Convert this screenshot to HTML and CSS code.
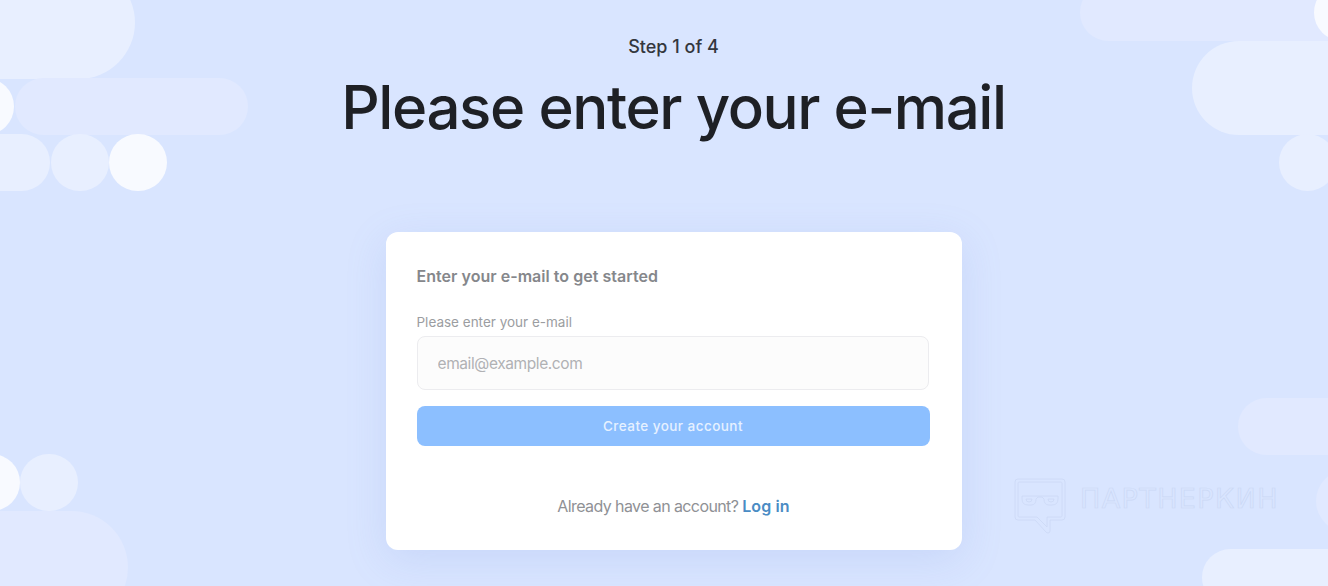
FILE: index.html
```html
<!DOCTYPE html>
<html lang="en">

<head>
    <meta charset="UTF-8">
    <meta name="viewport" content="width=device-width, initial-scale=1.0">
    <title>Step 1 of 4</title>
    <link rel="stylesheet" href="styles.css">
</head>

<body>
    <div class="shapes">
        <div class="shape pale big tl1"></div>
        <div class="shape soft tl2"></div>
        <div class="shape white tl3"></div>
        <div class="shape pale tl4"></div>
        <div class="shape pale tl5"></div>
        <div class="shape white tl6"></div>

        <div class="shape soft tr1"></div>
        <div class="shape white tr2"></div>
        <div class="shape pale tr3"></div>
        <div class="shape pale tr4"></div>

        <div class="shape white bl1"></div>
        <div class="shape pale bl2"></div>
        <div class="shape soft bl3"></div>

        <div class="shape soft br1"></div>
        <div class="shape soft br2"></div>
        <div class="shape pale br3"></div>
    </div>

    <main class="page">
        <div class="step">Step 1 of 4</div>
        <h1 class="title">Please enter your e-mail</h1>

        <form class="card">
            <h2 class="card-title">Enter your e-mail to get started</h2>
            <label class="field-label" for="email">Please enter your e-mail</label>
            <input class="field-input" id="email" type="text" placeholder="email@example.com">
            <button class="submit" type="button">Create your account</button>
            <p class="login">Already have an account? <a href="#">Log in</a></p>
        </form>
    </main>

    <div class="watermark">
        <svg class="watermark-logo" width="52" height="56" viewBox="0 0 52 56" fill="none">
            <path d="M4 1H48Q51 1 51 4V39Q51 42 48 42H36V53Q36 55 34 55Q33 55 32 54L21 42H4Q1 42 1 39V4Q1 1 4 1Z" />
            <path d="M5 4H47Q48 4 48 5V38Q48 39 47 39H33V49L23 39H5Q4 39 4 38V5Q4 4 5 4Z" />
            <path d="M8 18H44V21Q44 27 38 27H35Q30 27 30 21L28 19H24L22 21Q22 27 17 27H14Q8 27 8 21Z" />
            <path d="M12 21H18Q18 24 15 24Q12 24 12 21ZM34 21H40Q40 24 37 24Q34 24 34 21Z" />
        </svg>
        <span class="watermark-text">ПАРТНЕРКИН</span>
    </div>
</body>

</html>
```

FILE: styles.css
```css
* {
    box-sizing: border-box;
}

body {
    margin: 0;
    height: 586px;
    overflow: hidden;
    position: relative;
    background: #d9e5ff;
    font-family: Inter, "Noto Sans", sans-serif;
}

/* background shapes */
.shapes {
    position: absolute;
    inset: 0;
    overflow: hidden;
    filter: blur(.5px);
}

.shape {
    position: absolute;
    height: 57px;
    border-radius: 57px;
}

.white {
    width: 57px;
    background: #f8faff;
}

.pale {
    background: #e8efff;
}

.soft {
    background: #e1e9ff;
}

.tl1 { left: -60px; top: -34px; width: 195px; height: 113px; }
.tl2 { left: 15px; top: 78px; width: 233px; }
.tl3 { left: -43px; top: 78px; }
.tl4 { left: -40px; top: 134px; width: 90px; }
.tl5 { left: 51px; top: 134px; width: 58px; }
.tl6 { left: 109px; top: 134px; width: 58px; }

.tr1 { left: 1080px; top: -16px; width: 300px; }
.tr2 { left: 1314px; top: -16px; }
.tr3 { left: 1192px; top: 41px; width: 220px; height: 94px; }
.tr4 { left: 1279px; top: 134px; width: 57px; }

.bl1 { left: -37px; top: 454px; }
.bl2 { left: 20px; top: 454px; width: 58px; }
.bl3 { left: -60px; top: 511px; width: 188px; height: 113px; }

.br1 { left: 1238px; top: 398px; width: 140px; }
.br2 { left: 1316px; top: 470px; width: 62px; height: 62px; }
.br3 { left: 1202px; top: 549px; width: 180px; }

/* content */
.page {
    position: relative;
    display: flex;
    flex-direction: column;
    align-items: center;
    padding: 37px 0 0 19px;
}

.step {
    font-size: 18px;
    line-height: 20px;
    font-weight: 500;
    color: #34373e;
}

.title {
    margin: 10px 0 0;
    font-size: 60px;
    line-height: 80px;
    font-weight: 500;
    letter-spacing: -1.400px;
    color: #1e2025;
}

.card {
    display: flex;
    flex-direction: column;
    width: 576px;
    height: 318px;
    margin-top: 85px;
    padding: 34px 31px 0;
    background: #fff;
    border-radius: 12px;
    box-shadow: 0 10px 40px rgba(120, 150, 220, .18);
}

.card-title {
    margin: 0;
    font-size: 16px;
    line-height: 20px;
    font-weight: 600;
    letter-spacing: .03px;
    color: #85878b;
}

.field-label {
    margin-top: 28px;
    font-size: 13.500px;
    line-height: 16px;
    color: #9b9da1;
}

.field-input {
    width: 512px;
    height: 54px;
    margin-top: 6px;
    padding: 0 20px;
    background: #fcfcfc;
    border: 1px solid #ececef;
    border-radius: 8px;
    font-family: inherit;
    font-size: 15.500px;
    letter-spacing: -.4px;
}

.field-input::placeholder {
    color: #b0b1b4;
    opacity: 1;
}

.submit {
    width: 513px;
    height: 40px;
    margin-top: 16px;
    background: #8cbfff;
    border: 0;
    border-radius: 8px;
    font-family: inherit;
    font-size: 13.500px;
    font-weight: 500;
    letter-spacing: .45px;
    color: #e6f1ff;
}

.login {
    margin: 50px 0 0;
    text-align: center;
    font-size: 16px;
    line-height: 20px;
    letter-spacing: -.6px;
    color: #8f9195;
}

.login a {
    font-weight: 600;
    letter-spacing: .1px;
    color: #4a8cc4;
    text-decoration: none;
}

/* watermark */
.watermark {
    position: absolute;
    left: 1014px;
    top: 478px;
    display: flex;
    align-items: flex-start;
    gap: 14px;
}

.watermark-logo path {
    stroke: #cbd8f5;
    stroke-width: .8;
}

.watermark-text {
    margin-top: 6px;
    font-family: "DejaVu Sans", sans-serif;
    font-size: 27px;
    line-height: 30px;
    font-weight: 400;
    letter-spacing: 1.400px;
    color: transparent;
    -webkit-text-stroke: .7px #cbd8f5;
}
```
